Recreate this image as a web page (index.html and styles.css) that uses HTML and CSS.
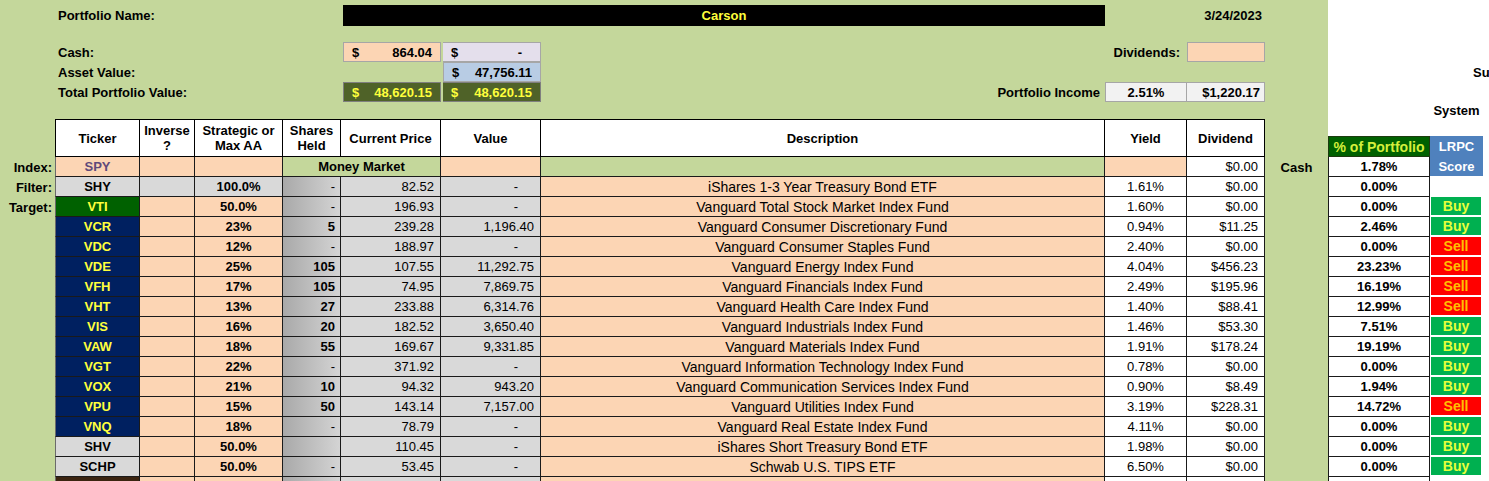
FILE: index.html
```html
<!DOCTYPE html>
<html>
<head>
<meta charset="utf-8">
<title>Portfolio</title>
<link rel="stylesheet" href="styles.css">
</head>
<body>
<div class="sheet">
  <!-- spacer -->
  <div class="full"></div>
  <!-- name row -->
  <div></div>
  <div class="c lbl s4">Portfolio Name:</div>
  <div class="c ctr namebar s3">Carson</div>
  <div></div>
  <div class="c r lbl date">3/24/2023</div>
  <div class="s4"></div>
  <!-- spacer -->
  <div class="full"></div>
  <!-- cash row -->
  <div></div>
  <div class="c lbl s4">Cash:</div>
  <div class="c acct box box-cash">$<span>864.04</span></div>
  <div class="c acct box box-lav">$<span class="dash">-</span></div>
  <div></div>
  <div class="c r lbl divlbl">Dividends:</div>
  <div class="box box-div"></div>
  <div class="s4"></div>
  <!-- asset row -->
  <div></div>
  <div class="c lbl s4">Asset Value:</div>
  <div></div>
  <div class="c acct box box-blue">$<span>47,756.11</span></div>
  <div class="s5"></div>
  <div class="c lbl su s2">Su</div>
  <!-- total row -->
  <div></div>
  <div class="c lbl s4">Total Portfolio Value:</div>
  <div class="c acct box box-olive first-olive">$<span>48,620.15</span></div>
  <div class="c acct box box-olive">$<span>48,620.15</span></div>
  <div class="c r lbl income">Portfolio Income</div>
  <div class="c ctr box box-gray">2.51%</div>
  <div class="c r box box-gray gray2">$1,220.17</div>
  <div class="s4"></div>
  <!-- system row -->
  <div class="s12"></div>
  <div class="c ctr lbl sys">System</div>
  <div></div>
  <!-- header -->
  <div class="rs2"></div>
  <div class="c ctr hd rs2 hd-first">Ticker</div>
  <div class="c ctr hd rs2">Inverse<br>?</div>
  <div class="c ctr hd rs2">Strategic or<br>Max AA</div>
  <div class="c ctr hd rs2">Shares<br>Held</div>
  <div class="c ctr hd rs2">Current Price</div>
  <div class="c ctr hd rs2">Value</div>
  <div class="c ctr hd rs2">Description</div>
  <div class="c ctr hd rs2">Yield</div>
  <div class="c ctr hd rs2">Dividend</div>
  <div class="rs2"></div>
  <div class="s3"></div>
  <div class="c ctr pct-hd">% of Portfolio</div>
  <div class="c ctr lrpc-hd">LRPC</div>
  <div></div>

  <!-- Index -->
  <div class="c r lbl rowlbl">Index:</div>
  <div class="c ctr cell tk or spy">SPY</div>
  <div class="cell or"></div>
  <div class="cell or"></div>
  <div class="c ctr cell grn bold s2">Money Market</div>
  <div class="cell or"></div>
  <div class="cell grn"></div>
  <div class="cell or"></div>
  <div class="c r cell wh num">$0.00</div>
  <div class="c ctr bold">Cash</div>
  <div class="c ctr cell pct">1.78%</div>
  <div class="c ctr lrpc-score">Score</div>
  <div></div>

  <!-- Filter -->
  <div class="c r lbl rowlbl">Filter:</div>
  <div class="c ctr cell tk gr">SHY</div>
  <div class="cell gr"></div>
  <div class="c ctr cell gr bold">100.0%</div>
  <div class="c r cell sh">-</div>
  <div class="c r cell gr num">82.52</div>
  <div class="c r cell gr dash-cell">-</div>
  <div class="c ctr cell or desc">iShares 1-3 Year Treasury Bond ETF</div>
  <div class="c ctr cell wh">1.61%</div>
  <div class="c r cell wh num">$0.00</div>
  <div></div>
  <div class="c ctr cell pct">0.00%</div>
  <div></div>
  <div></div>

  <!-- Target -->
  <div class="c r lbl rowlbl">Target:</div>
  <div class="c ctr cell tk tk-green">VTI</div>
  <div class="cell or"></div>
  <div class="c ctr cell or bold">50.0%</div>
  <div class="c r cell sh">-</div>
  <div class="c r cell gr num">196.93</div>
  <div class="c r cell gr dash-cell">-</div>
  <div class="c ctr cell or desc">Vanguard Total Stock Market Index Fund</div>
  <div class="c ctr cell wh">1.60%</div>
  <div class="c r cell wh num">$0.00</div>
  <div></div>
  <div class="c ctr cell pct">0.00%</div>
  <div class="c ctr sig buy">Buy</div>
  <div></div>

  <!-- VCR -->
  <div></div>
  <div class="c ctr cell tk navy">VCR</div>
  <div class="cell or"></div>
  <div class="c ctr cell or bold">23%</div>
  <div class="c r cell sh bold">5</div>
  <div class="c r cell gr num">239.28</div>
  <div class="c r cell gr num">1,196.40</div>
  <div class="c ctr cell or desc">Vanguard Consumer Discretionary Fund</div>
  <div class="c ctr cell wh">0.94%</div>
  <div class="c r cell wh num">$11.25</div>
  <div></div>
  <div class="c ctr cell pct">2.46%</div>
  <div class="c ctr sig buy">Buy</div>
  <div></div>

  <!-- VDC -->
  <div></div>
  <div class="c ctr cell tk navy">VDC</div>
  <div class="cell or"></div>
  <div class="c ctr cell or bold">12%</div>
  <div class="c r cell sh">-</div>
  <div class="c r cell gr num">188.97</div>
  <div class="c r cell gr dash-cell">-</div>
  <div class="c ctr cell or desc">Vanguard Consumer Staples Fund</div>
  <div class="c ctr cell wh">2.40%</div>
  <div class="c r cell wh num">$0.00</div>
  <div></div>
  <div class="c ctr cell pct">0.00%</div>
  <div class="c ctr sig sell">Sell</div>
  <div></div>

  <!-- VDE -->
  <div></div>
  <div class="c ctr cell tk navy">VDE</div>
  <div class="cell or"></div>
  <div class="c ctr cell or bold">25%</div>
  <div class="c r cell sh bold">105</div>
  <div class="c r cell gr num">107.55</div>
  <div class="c r cell gr num">11,292.75</div>
  <div class="c ctr cell or desc">Vanguard Energy Index Fund</div>
  <div class="c ctr cell wh">4.04%</div>
  <div class="c r cell wh num">$456.23</div>
  <div></div>
  <div class="c ctr cell pct">23.23%</div>
  <div class="c ctr sig sell">Sell</div>
  <div></div>

  <!-- VFH -->
  <div></div>
  <div class="c ctr cell tk navy">VFH</div>
  <div class="cell or"></div>
  <div class="c ctr cell or bold">17%</div>
  <div class="c r cell sh bold">105</div>
  <div class="c r cell gr num">74.95</div>
  <div class="c r cell gr num">7,869.75</div>
  <div class="c ctr cell or desc">Vanguard Financials Index Fund</div>
  <div class="c ctr cell wh">2.49%</div>
  <div class="c r cell wh num">$195.96</div>
  <div></div>
  <div class="c ctr cell pct">16.19%</div>
  <div class="c ctr sig sell">Sell</div>
  <div></div>

  <!-- VHT -->
  <div></div>
  <div class="c ctr cell tk navy">VHT</div>
  <div class="cell or"></div>
  <div class="c ctr cell or bold">13%</div>
  <div class="c r cell sh bold">27</div>
  <div class="c r cell gr num">233.88</div>
  <div class="c r cell gr num">6,314.76</div>
  <div class="c ctr cell or desc">Vanguard Health Care Index Fund</div>
  <div class="c ctr cell wh">1.40%</div>
  <div class="c r cell wh num">$88.41</div>
  <div></div>
  <div class="c ctr cell pct">12.99%</div>
  <div class="c ctr sig sell">Sell</div>
  <div></div>

  <!-- VIS -->
  <div></div>
  <div class="c ctr cell tk navy">VIS</div>
  <div class="cell or"></div>
  <div class="c ctr cell or bold">16%</div>
  <div class="c r cell sh bold">20</div>
  <div class="c r cell gr num">182.52</div>
  <div class="c r cell gr num">3,650.40</div>
  <div class="c ctr cell or desc">Vanguard Industrials Index Fund</div>
  <div class="c ctr cell wh">1.46%</div>
  <div class="c r cell wh num">$53.30</div>
  <div></div>
  <div class="c ctr cell pct">7.51%</div>
  <div class="c ctr sig buy">Buy</div>
  <div></div>

  <!-- VAW -->
  <div></div>
  <div class="c ctr cell tk navy">VAW</div>
  <div class="cell or"></div>
  <div class="c ctr cell or bold">18%</div>
  <div class="c r cell sh bold">55</div>
  <div class="c r cell gr num">169.67</div>
  <div class="c r cell gr num">9,331.85</div>
  <div class="c ctr cell or desc">Vanguard Materials Index Fund</div>
  <div class="c ctr cell wh">1.91%</div>
  <div class="c r cell wh num">$178.24</div>
  <div></div>
  <div class="c ctr cell pct">19.19%</div>
  <div class="c ctr sig buy">Buy</div>
  <div></div>

  <!-- VGT -->
  <div></div>
  <div class="c ctr cell tk navy">VGT</div>
  <div class="cell or"></div>
  <div class="c ctr cell or bold">22%</div>
  <div class="c r cell sh">-</div>
  <div class="c r cell gr num">371.92</div>
  <div class="c r cell gr dash-cell">-</div>
  <div class="c ctr cell or desc">Vanguard Information Technology Index Fund</div>
  <div class="c ctr cell wh">0.78%</div>
  <div class="c r cell wh num">$0.00</div>
  <div></div>
  <div class="c ctr cell pct">0.00%</div>
  <div class="c ctr sig buy">Buy</div>
  <div></div>

  <!-- VOX -->
  <div></div>
  <div class="c ctr cell tk navy">VOX</div>
  <div class="cell or"></div>
  <div class="c ctr cell or bold">21%</div>
  <div class="c r cell sh bold">10</div>
  <div class="c r cell gr num">94.32</div>
  <div class="c r cell gr num">943.20</div>
  <div class="c ctr cell or desc">Vanguard Communication Services Index Fund</div>
  <div class="c ctr cell wh">0.90%</div>
  <div class="c r cell wh num">$8.49</div>
  <div></div>
  <div class="c ctr cell pct">1.94%</div>
  <div class="c ctr sig buy">Buy</div>
  <div></div>

  <!-- VPU -->
  <div></div>
  <div class="c ctr cell tk navy">VPU</div>
  <div class="cell or"></div>
  <div class="c ctr cell or bold">15%</div>
  <div class="c r cell sh bold">50</div>
  <div class="c r cell gr num">143.14</div>
  <div class="c r cell gr num">7,157.00</div>
  <div class="c ctr cell or desc">Vanguard Utilities Index Fund</div>
  <div class="c ctr cell wh">3.19%</div>
  <div class="c r cell wh num">$228.31</div>
  <div></div>
  <div class="c ctr cell pct">14.72%</div>
  <div class="c ctr sig sell">Sell</div>
  <div></div>

  <!-- VNQ -->
  <div></div>
  <div class="c ctr cell tk navy">VNQ</div>
  <div class="cell or"></div>
  <div class="c ctr cell or bold">18%</div>
  <div class="c r cell sh">-</div>
  <div class="c r cell gr num">78.79</div>
  <div class="c r cell gr dash-cell">-</div>
  <div class="c ctr cell or desc">Vanguard Real Estate Index Fund</div>
  <div class="c ctr cell wh">4.11%</div>
  <div class="c r cell wh num">$0.00</div>
  <div></div>
  <div class="c ctr cell pct">0.00%</div>
  <div class="c ctr sig buy">Buy</div>
  <div></div>

  <!-- SHV -->
  <div></div>
  <div class="c ctr cell tk gr">SHV</div>
  <div class="cell or"></div>
  <div class="c ctr cell or bold">50.0%</div>
  <div class="c r cell sh"></div>
  <div class="c r cell gr num">110.45</div>
  <div class="c r cell gr dash-cell">-</div>
  <div class="c ctr cell or desc">iShares Short Treasury Bond ETF</div>
  <div class="c ctr cell wh">1.98%</div>
  <div class="c r cell wh num">$0.00</div>
  <div></div>
  <div class="c ctr cell pct">0.00%</div>
  <div class="c ctr sig buy">Buy</div>
  <div></div>

  <!-- SCHP -->
  <div></div>
  <div class="c ctr cell tk gr">SCHP</div>
  <div class="cell or"></div>
  <div class="c ctr cell or bold">50.0%</div>
  <div class="c r cell sh">-</div>
  <div class="c r cell gr num">53.45</div>
  <div class="c r cell gr dash-cell">-</div>
  <div class="c ctr cell or desc">Schwab U.S. TIPS ETF</div>
  <div class="c ctr cell wh">6.50%</div>
  <div class="c r cell wh num">$0.00</div>
  <div></div>
  <div class="c ctr cell pct">0.00%</div>
  <div class="c ctr sig buy">Buy</div>
  <div></div>

  <!-- partial next row -->
  <div></div>
  <div class="cell tk brown"></div>
  <div class="cell or"></div>
  <div class="cell or"></div>
  <div class="cell sh"></div>
  <div class="cell gr"></div>
  <div class="cell gr"></div>
  <div class="cell or"></div>
  <div class="cell wh"></div>
  <div class="cell wh"></div>
  <div></div>
  <div class="cell pct"></div>
  <div class="sig"></div>
  <div></div>
</div>
</body>
</html>
```

FILE: styles.css
```css
* { box-sizing: border-box; }

body {
  margin: 0;
  overflow: hidden;
  background: #ffffff;
  font-family: "Liberation Sans", Arial, sans-serif;
  font-size: 13px;
  color: #000;
}

.sheet {
  width: 1489px;
  display: grid;
  grid-template-columns: 55px 85px 55px 88px 58px 100px 100px 564px 82px 78px 63px 102px 53px 6px;
  grid-template-rows: 5px 21px 16px 20px 20px 20px 17px 17px 21px;
  grid-auto-rows: 20px;
  background: linear-gradient(to right, #c4d79b 1328px, #ffffff 1328px);
}

.full { grid-column: span 14; }
.s2 { grid-column: span 2; }
.s3 { grid-column: span 3; }
.s4 { grid-column: span 4; }
.s5 { grid-column: span 5; }
.s12 { grid-column: span 12; }
.rs2 { grid-row: span 2; }

.c {
  display: flex;
  align-items: center;
  white-space: nowrap;
  overflow: hidden;
}
.ctr { justify-content: center; text-align: center; }
.r { justify-content: flex-end; padding-right: 5px; }

.bold { font-weight: bold; }

.lbl { font-weight: bold; padding-left: 3px; }
.lbl.r { padding-left: 0; }
.date { padding-right: 3px; }
.divlbl { padding-right: 7px; }
.income { padding-right: 5px; }
.su { padding-left: 43px; }
.sys { padding-left: 0; }
.rowlbl { padding-right: 3px; }

.namebar {
  background: #000;
  color: #ffff3c;
  font-weight: bold;
  margin-left: 2px;
}

/* top summary boxes */
.box { border: 1px solid #a6a6a6; }
.acct {
  justify-content: space-between;
  padding: 0 8px 0 8px;
  font-weight: bold;
}
.box-cash { background: #fcd5b4; margin-left: 2px; }
.box-lav { background: #e4dfec; margin-left: 2px; border-left: none; padding-right: 18px; }
.box-blue { background: #b8cce4; margin-left: 2px; }
.box-olive { background: #4f6228; color: #ffff3c; border-color: #7f7f7f; }
.first-olive { margin-left: 2px; }
.box-olive + .box-olive { margin-left: 2px; border-left: none; }
.box-div { background: #fcd5b4; }
.box-gray { background: #f2f2f2; font-weight: bold; }
.gray2 { border-left: none; padding-right: 4px; }

/* header */
.hd {
  background: #fff;
  font-weight: bold;
  line-height: 15px;
  border-top: 1px solid #000;
  border-right: 1px solid #000;
  border-bottom: 1px solid #000;
}
.hd-first { border-left: 1px solid #000; }

.pct-hd {
  background: #006100;
  color: #d4ef3c;
  font-weight: bold;
  font-size: 14px;
  border: 1px solid #1d3b10;
}
.lrpc-hd {
  background: #4f81bd;
  color: #fff;
  font-weight: bold;
}
.lrpc-score {
  background: #4f81bd;
  color: #fff;
  font-weight: bold;
  border-bottom: 1px solid #fff;
}

/* data cells */
.cell {
  border-right: 1px solid #1a1a1a;
  border-bottom: 1px solid #1a1a1a;
}
.tk {
  border-left: 1px solid #6b6b6b;
  font-weight: bold;
}
.or { background: #fcd5b4; }
.gr { background: #d9d9d9; }
.grn { background: #c4d79b; }
.wh { background: #ffffff; }
.sh {
  background: linear-gradient(to right, #a9a9a9, #d4d4d4);
  padding-right: 5px;
}
.num { padding-right: 6px; }
.dash-cell { padding-right: 22px; }
.desc { font-size: 14px; }

.spy { color: #60497a; }
.navy { background: #002060; color: #ffff3c; }
.tk-green { background: #006100; color: #ffff3c; }
.brown { background: #3b2410; }

.pct {
  background: #fff;
  font-weight: bold;
  border-left: 1px solid #1a1a1a;
}

.sig {
  font-weight: bold;
  font-size: 14px;
  border-bottom: 2px solid #fff;
  border-left: 1px solid #fff;
  border-right: 2px solid #fff;
}
.buy { background: #00b050; color: #e8ff3a; }
.sell { background: #ff0000; color: #ffc000; }
```
